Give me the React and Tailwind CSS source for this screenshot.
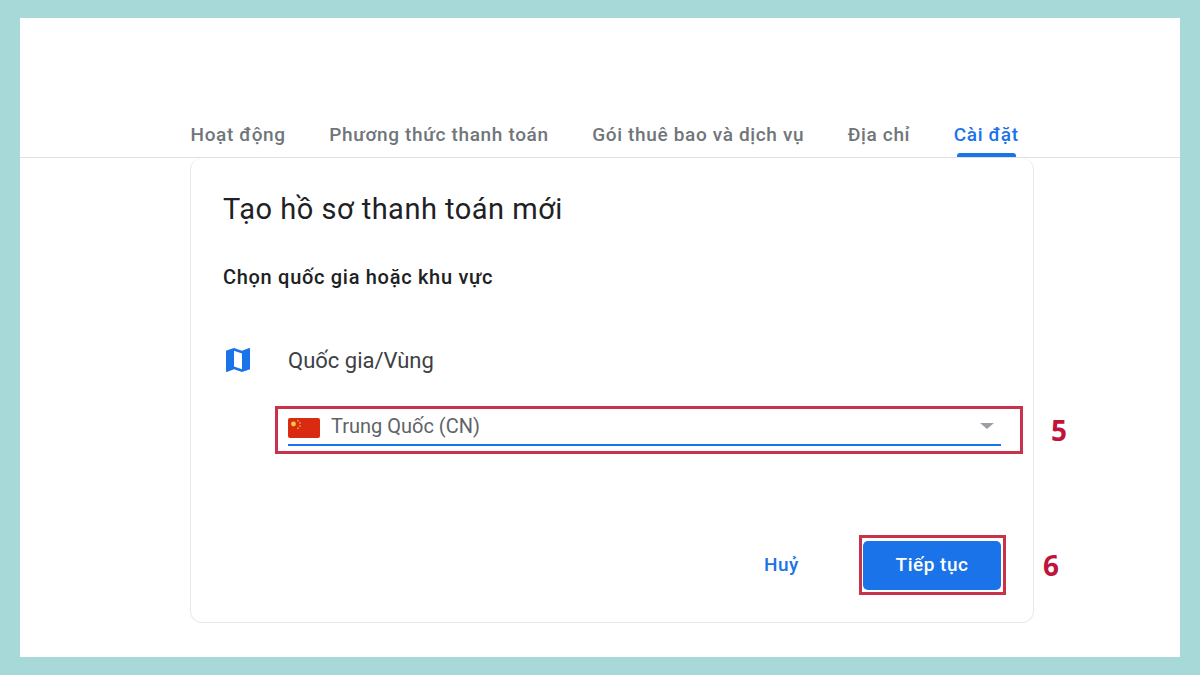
import React from "react";

const tabs = ["Hoạt động", "Phương thức thanh toán", "Gói thuê bao và dịch vụ", "Địa chỉ"];

const MapIcon = () => (
  <svg viewBox="0 0 24 24" className="block w-[32px] h-[32px] fill-[#1a73e8]">
    <path d="M20.5 3l-.16.03L15 5.1 9 3 3.36 4.9c-.21.07-.36.25-.36.48V20.5c0 .28.22.5.5.5l.16-.03L9 18.9l6 2.1 5.64-1.9c.21-.07.36-.25.36-.48V3.5c0-.28-.22-.5-.5-.5zM15 19l-6-2.11V5l6 2.11V19z" />
  </svg>
);

const Flag = () => (
  <svg viewBox="0 0 32 20" className="w-[32px] h-[20px] mb-[1px] shrink-0">
    <rect width="32" height="20" rx="2" fill="#d92b12" />
    <circle cx="5.5" cy="6" r="2.4" fill="#f6c945" />
    <circle cx="10" cy="2.8" r="0.8" fill="#f6c945" />
    <circle cx="12" cy="5" r="0.8" fill="#f6c945" />
    <circle cx="12" cy="8" r="0.8" fill="#f6c945" />
    <circle cx="10" cy="10.2" r="0.8" fill="#f6c945" />
  </svg>
);

export default function App() {
  return (
    <div className="h-screen bg-[#a8d9d9] px-[20px] py-[18px] font-['Roboto',sans-serif]">
      <div className="h-full bg-white flex flex-col">
        {/* Tabs */}
        <div className="h-[140px] shrink-0 border-b border-[#dfe1e5] flex items-end pl-[170.5px] gap-[43.5px]">
          {tabs.map((t) => (
            <div key={t} className="h-[39px] text-[19px] leading-[33px] font-medium text-[#70757a] tracking-[0.65px] whitespace-nowrap">
              {t}
            </div>
          ))}
          <div className="h-[39px] flex flex-col items-center text-[19px] leading-[33px] font-medium text-[#1a73e8] tracking-[0.65px] whitespace-nowrap">
            <span className="flex-1">Cài đặt</span>
            <span className="w-[59px] h-[4px] bg-[#1a73e8] rounded-t-[3px]"></span>
          </div>
        </div>

        {/* Card */}
        <div className="ml-[170px] w-[844px] h-[465px] border border-[#e6e8eb] border-t-0 rounded-[12px] pl-[32px] pr-[32px] flex flex-col">
          <h1 className="mt-[33px] text-[29px] leading-[36px] font-normal text-[#202124] tracking-[0.5px]">Tạo hồ sơ thanh toán mới</h1>
          <p className="mt-[38px] text-[20px] leading-[24px] font-medium text-[#202124] tracking-[0.7px]">Chọn quốc gia hoặc khu vực</p>

          <div className="mt-[53px] flex items-center h-[36px]">
            <div className="-ml-[1px] w-[66px]"><MapIcon /></div>
            <span className="text-[22px] text-[#3c4043]">Quốc gia/Vùng</span>
          </div>

          {/* Select */}
          <div className="relative mt-[28px] ml-[52px] w-[748px] h-[48px] shrink-0 border-[3px] border-[#c8324b] pl-[10px] pr-[19px] pt-[4px]">
            <div className="h-[33px] border-b-2 border-[#1a73e8] flex items-center gap-[11px]">
              <Flag />
              <span className="flex-1 pb-[6px] text-[20px] text-[#5f6368]">Trung Quốc (CN)</span>
              <span className="mr-[7px] mb-[6px] w-0 h-0 border-x-[7px] border-x-transparent border-t-[6px] border-t-[#9aa0a6]"></span>
            </div>
            <span className="absolute left-[773px] top-[3px] text-[28px] leading-[36px] font-bold text-[#c0143c] font-['Open_Sans',sans-serif]">5</span>
          </div>

          {/* Actions */}
          <div className="mt-[81px] ml-[536px] flex items-center">
            <span className="w-[100px] shrink-0 pl-[5px] text-[19px] font-medium text-[#1a73e8] tracking-[0.5px]">Huỷ</span>
            <div className="relative w-[147px] h-[60px] shrink-0 border-[3px] border-[#c8324b] pt-[3px] pb-[2px] pl-[1px] pr-[2px]">
              <button className="w-full h-full bg-[#1a73e8] rounded-[5px] text-white text-[19px] font-medium tracking-[0.5px]">Tiếp tục</button>
              <span className="absolute left-[181px] top-[9px] text-[28px] leading-[36px] font-bold text-[#c0143c] font-['Open_Sans',sans-serif]">6</span>
            </div>
          </div>
        </div>
      </div>
    </div>
  );
}
